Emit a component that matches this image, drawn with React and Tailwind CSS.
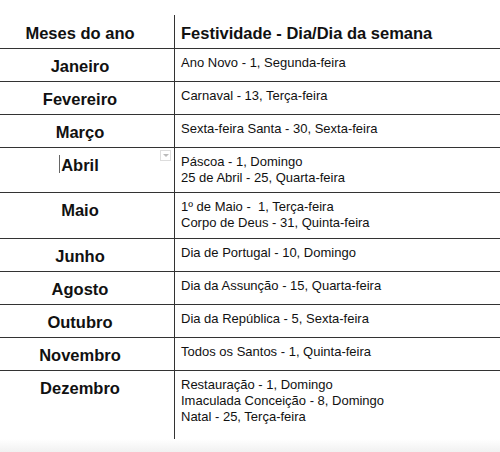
import React from 'react';

const rows = [
    { month: 'Janeiro', items: ['Ano Novo - 1, Segunda-feira'] },
    { month: 'Fevereiro', items: ['Carnaval - 13, Terça-feira'] },
    { month: 'Março', items: ['Sexta-feira Santa - 30, Sexta-feira'] },
    { month: 'Abril', items: ['Páscoa - 1, Domingo', '25 de Abril - 25, Quarta-feira'], active: true },
    { month: 'Maio', items: ['1º de Maio -  1, Terça-feira', 'Corpo de Deus - 31, Quinta-feira'], extra: 'pb-[7px]' },
    { month: 'Junho', items: ['Dia de Portugal - 10, Domingo'] },
    { month: 'Agosto', items: ['Dia da Assunção - 15, Quarta-feira'] },
    { month: 'Outubro', items: ['Dia da República - 5, Sexta-feira'] },
    { month: 'Novembro', items: ['Todos os Santos - 1, Quinta-feira'] },
    { month: 'Dezembro', items: ['Restauração - 1, Domingo', 'Imaculada Conceição - 8, Domingo', 'Natal - 25, Terça-feira'], extra: 'pb-[14px]', last: true },
];

const App = () => {
    return (
        <div className="w-[500px] h-[452px] bg-white flex flex-col font-['Liberation_Sans',Arial,sans-serif] text-[#111] overflow-hidden">
            <div className="pt-[15px]">
                {/* Header */}
                <div className="flex border-b border-[#333]">
                    <div className="w-[175px] shrink-0 border-r border-[#333] pr-[14px] pt-[8px] pb-[5px] text-center text-[16.5px] leading-[20px] font-bold">
                        Meses do ano
                    </div>
                    <div className="flex-1 pl-[6px] pt-[8px] pb-[5px] text-[16.5px] leading-[20px] font-bold">
                        Festividade - Dia/Dia da semana
                    </div>
                </div>

                {/* Rows */}
                {rows.map((row) => (
                    <div key={row.month} className={row.last ? 'flex' : 'flex border-b border-[#333]'}>
                        <div className="relative w-[175px] shrink-0 border-r border-[#333] pr-[14px] pt-[7px] pb-[5px] text-center text-[16.5px] leading-[20px] font-bold">
                            {row.active ? (
                                <span className="relative">
                                    <span className="absolute -left-[2px] top-[-1px] w-px h-[18px] bg-[#666]"></span>
                                    {row.month}
                                </span>
                            ) : (
                                row.month
                            )}
                            {row.active && (
                                <div className="absolute right-[3px] top-[2px] w-[11px] h-[11px] border border-[#ddd] bg-white flex items-center justify-center">
                                    <div className="w-0 h-0 border-l-[3px] border-r-[3px] border-t-[3px] border-l-transparent border-r-transparent border-t-[#bbb]"></div>
                                </div>
                            )}
                        </div>
                        <div className={`flex-1 pl-[6px] pt-[6px] text-[13px] leading-[16px] whitespace-pre ${row.extra || 'pb-[6px]'}`}>
                            {row.items.map((item) => (
                                <div key={item}>{item}</div>
                            ))}
                        </div>
                    </div>
                ))}
            </div>

            <div className="flex-1 bg-gradient-to-b from-white to-[#f1f1f1]"></div>
        </div>
    );
};

export default App;
